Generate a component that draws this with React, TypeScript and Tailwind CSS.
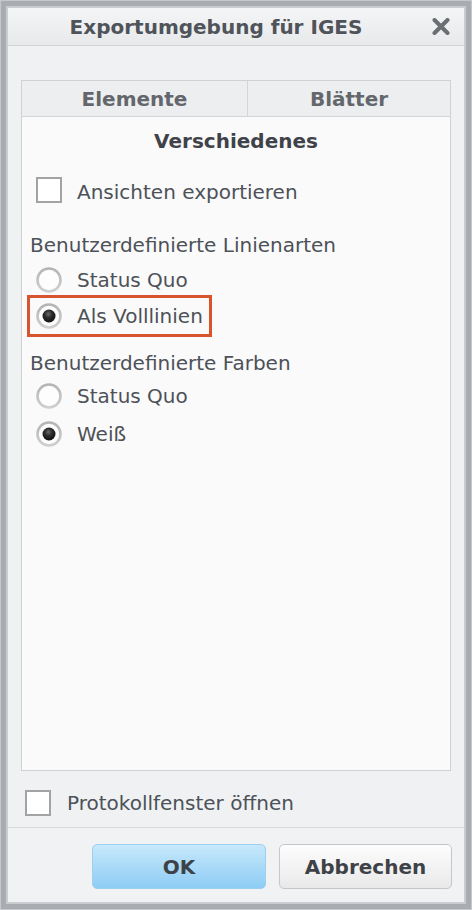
import React from "react";

const font = { fontFamily: '"DejaVu Sans", "Liberation Sans", sans-serif' };

function Radio({ checked }: { checked?: boolean }) {
  return (
    <svg width="26" height="26" viewBox="0 0 26 26" className="shrink-0">
      <defs>
        <radialGradient id="dot" cx="45%" cy="35%" r="65%">
          <stop offset="0%" stopColor="#6a6a6a" />
          <stop offset="45%" stopColor="#2c2c2c" />
          <stop offset="100%" stopColor="#111" />
        </radialGradient>
        <linearGradient id="ring" x1="0" y1="0" x2="0" y2="1">
          <stop offset="0%" stopColor="#b4b4b4" />
          <stop offset="100%" stopColor="#cfcfcf" />
        </linearGradient>
      </defs>
      <circle cx="13" cy="13" r="11.5" fill="#fdfdfd" stroke="url(#ring)" strokeWidth="2.6" />
      {checked && <circle cx="13" cy="13" r="6.5" fill="url(#dot)" />}
    </svg>
  );
}

function Checkbox() {
  return <div className="w-[26px] h-[26px] shrink-0 border-2 border-[#a3a3a3] bg-white" />;
}

export default function App() {
  return (
    <div
      className="w-[472px] h-[910px] bg-[#a9adb1] border border-[#c6c9cc] p-[5px] text-[#4d5158] text-[20px]"
      style={font}
    >
      <div className="h-full border-2 border-[#c9ccd0] bg-[#eff1f3] flex flex-col">
        {/* Title bar */}
        <div className="h-[38px] shrink-0 flex items-center border-b border-[#d2d5d8] bg-gradient-to-b from-[#f4f5f7] to-[#e7e9eb]">
          <div className="flex-1 text-center font-bold text-[20px] leading-[24px] text-[#4f535a]">
            Exportumgebung für IGES
          </div>
          <div className="w-[40px] flex justify-end pr-[14px]">
            <svg width="18" height="17" viewBox="0 0 18 17">
              <path d="M2.5 2 L15.5 15 M15.5 2 L2.5 15" stroke="#6b6e72" strokeWidth="4" strokeLinecap="round" />
            </svg>
          </div>
        </div>

        {/* Body */}
        <div className="flex-1 flex flex-col px-[13px] pt-[34px]">
          <div className="flex-1 flex flex-col border border-[#cfd2d5]">
            <div className="h-[36px] shrink-0 flex bg-[#eceef0] border-b border-[#d3d6d9] font-bold text-[#63676c]">
              <div className="w-[226px] border-r border-[#d3d6d9] flex items-center justify-center">Elemente</div>
              <div className="flex-1 flex items-center justify-center">Blätter</div>
            </div>
            <div className="flex-1 bg-[#fafafa] flex flex-col">
              <div className="mt-[12px] h-[24px] leading-[24px] text-center font-bold text-[#3f4349]">
                Verschiedenes
              </div>
              <div className="mt-[23px] h-[28px] flex items-center pl-[14px] gap-[15px]">
                <Checkbox />
                <span className="leading-[24px] mt-[3px]">Ansichten exportieren</span>
              </div>
              <div className="mt-[29px] h-[24px] leading-[24px] pl-[8px]">Benutzerdefinierte Linienarten</div>
              <div className="mt-[9px] h-[28px] flex items-center pl-[14px] gap-[15px]">
                <Radio />
                <span className="leading-[24px]">Status Quo</span>
              </div>
              <div className="mt-[1px] ml-[5px] w-[185px] h-[42px] border-[3px] border-[#d9532e] flex items-center pl-[6px] gap-[15px]">
                <Radio checked />
                <span className="leading-[24px]">Als Volllinien</span>
              </div>
              <div className="mt-[14px] h-[24px] leading-[24px] pl-[8px]">Benutzerdefinierte Farben</div>
              <div className="mt-[7px] h-[28px] flex items-center pl-[14px] gap-[15px]">
                <Radio />
                <span className="leading-[24px]">Status Quo</span>
              </div>
              <div className="mt-[10px] h-[28px] flex items-center pl-[14px] gap-[15px]">
                <Radio checked />
                <span className="leading-[24px]">Weiß</span>
              </div>
            </div>
          </div>
          <div className="mt-[18px] mb-[10px] h-[28px] flex items-center pl-[4px] gap-[16px]">
            <Checkbox />
            <span className="leading-[24px]">Protokollfenster öffnen</span>
          </div>
        </div>

        {/* Footer */}
        <div className="h-[75px] shrink-0 border-t border-[#d8dadd] bg-[#f0f2f4] flex justify-end items-start pt-[16px] pr-[12px] gap-[13px]">
          <button className="w-[174px] h-[45px] rounded-[5px] border border-[#9dd0ef] bg-gradient-to-b from-[#c6e8fb] to-[#8ecdf5] font-bold text-[#3e4248] text-[20px]" style={font}>
            OK
          </button>
          <button className="w-[173px] h-[45px] rounded-[5px] border border-[#c6c6c6] bg-gradient-to-b from-[#fdfdfd] to-[#e9e9e9] font-bold text-[#3e4248] text-[20px]" style={font}>
            Abbrechen
          </button>
        </div>
      </div>
    </div>
  );
}
